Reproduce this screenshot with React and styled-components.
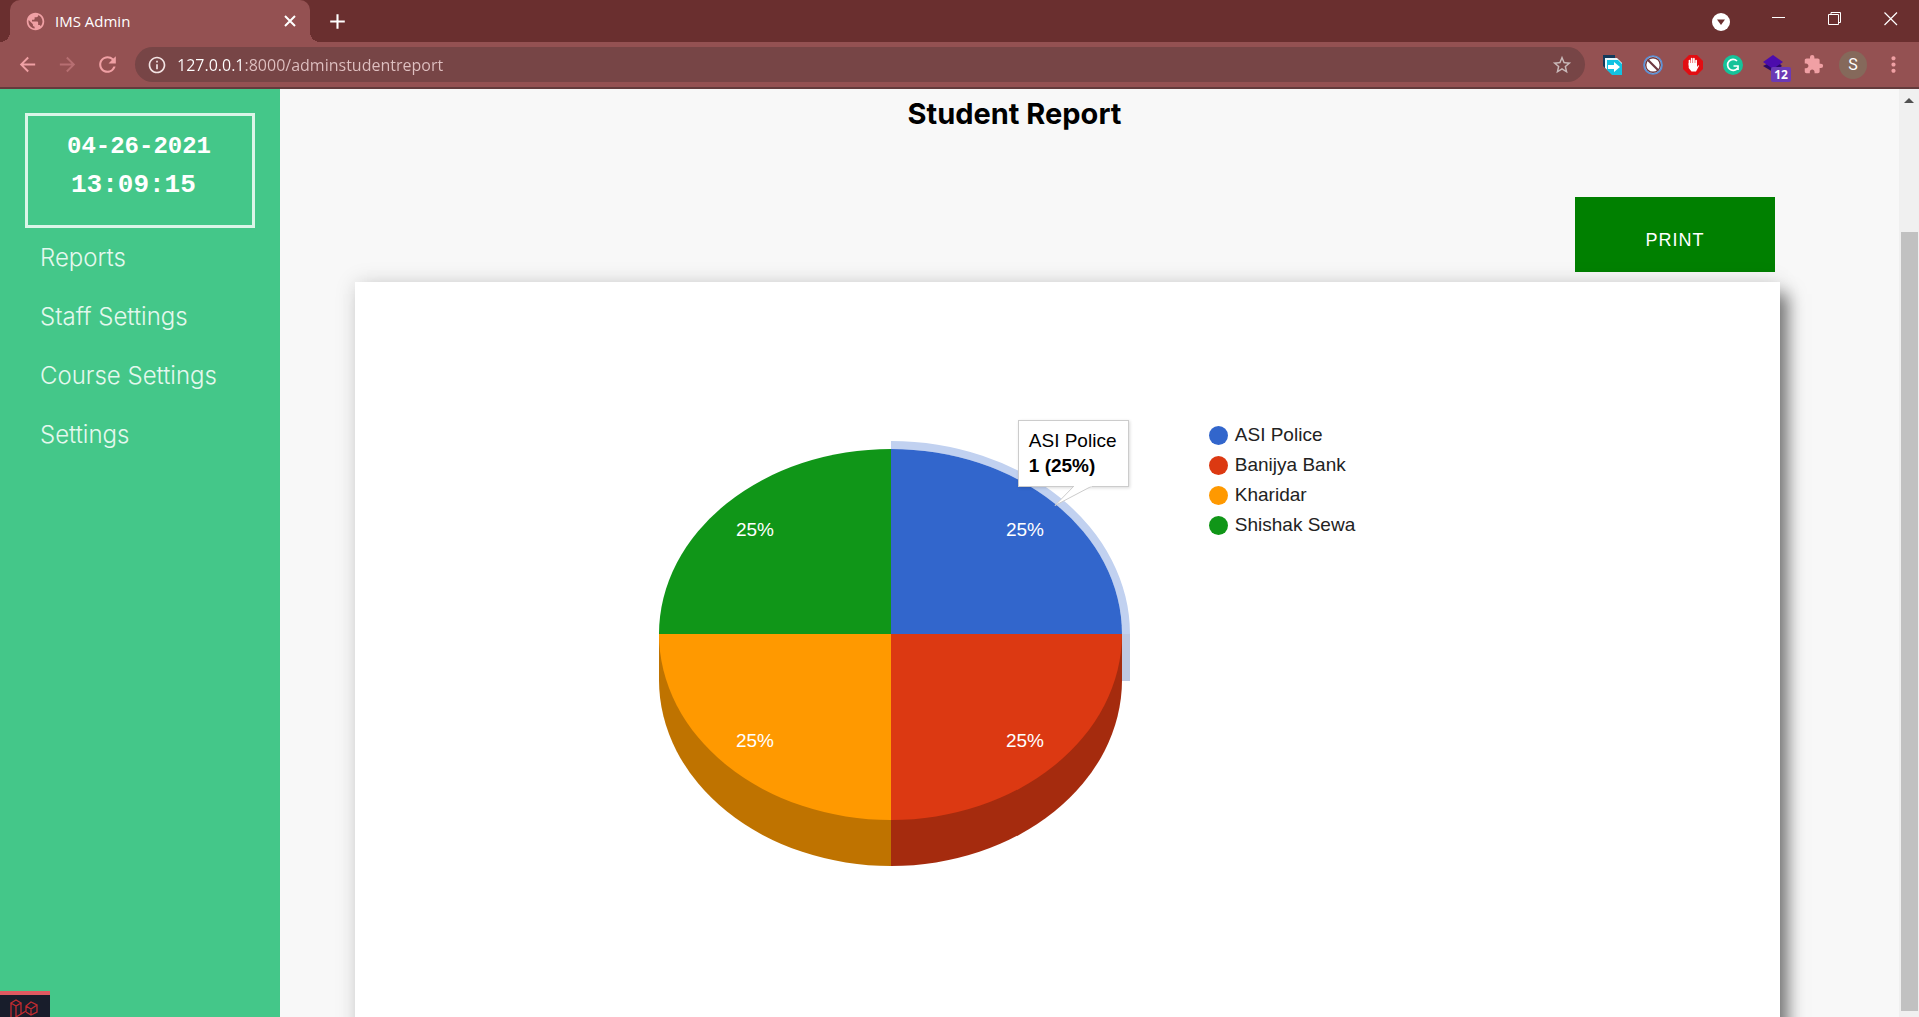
import React from "react";
import styled, { createGlobalStyle } from "styled-components";
import {
  MdArrowBack, MdArrowForward, MdRefresh, MdInfoOutline, MdStarBorder,
  MdExtension, MdPublic, MdClose, MdAdd, MdMoreVert,
} from "react-icons/md";

const GlobalStyle = createGlobalStyle`
  *, *::before, *::after { box-sizing: border-box; }
  body { margin: 0; overflow: hidden; background: #f8f8f8; font-family: "Liberation Sans", Arial, sans-serif; }
  button { padding: 0; border: 0; background: none; color: inherit; font: inherit; cursor: pointer; }
  svg { display: block; }
`;

const Window = styled.div`
  display: flex;
  flex-direction: column;
  height: 100vh;
`;

const BrowserBar = styled.header`
  flex: none;
  background: #945152;
  border-bottom: 2px solid #633b3c;
  font-family: "Open Sans", "Noto Sans", sans-serif;
`;

const TabStrip = styled.div`
  display: flex;
  align-items: center;
  height: 42px;
  padding-left: 10px;
  background: #6a2f2f;
  color: #fff;
`;

const Tab = styled.div`
  position: relative;
  display: flex;
  align-items: center;
  gap: 9px;
  width: 300px;
  height: 42px;
  padding: 0 10px 0 15px;
  border-radius: 10px 10px 0 0;
  background: #945152;
  font-size: 15px;
  line-height: 20px;

  &::before,
  &::after {
    content: "";
    position: absolute;
    bottom: 0;
    width: 10px;
    height: 10px;
  }
  &::before {
    right: 100%;
    background: radial-gradient(circle at 0 0, transparent 10px, #945152 10px);
  }
  &::after {
    left: 100%;
    background: radial-gradient(circle at 100% 0, transparent 10px, #945152 10px);
  }
`;

const Favicon = styled.span`
  color: #f0a0a4;
`;

const TabTitle = styled.span`
  flex: 1;
`;

const IconButton = styled.button`
  display: flex;
  flex: none;
  align-items: center;
  justify-content: center;
  width: ${(p) => p.$width || 40}px;
  height: 36px;
  color: ${(p) => p.$color || "#fff"};
`;

const WindowControls = styled.div`
  display: flex;
  align-items: center;
  margin-left: auto;
  padding-bottom: 4px;
`;

const TabSearch = styled(IconButton)`
  margin-right: 10px;
  padding-top: 5px;
`;

const Toolbar = styled.div`
  display: flex;
  align-items: center;
  height: 45px;
  padding: 0 6px 0 7px;
`;

const AddressBar = styled.form`
  display: flex;
  flex: 1;
  align-items: center;
  height: 35px;
  margin: 0 8px;
  padding-left: 12px;
  border-radius: 18px;
  background: #774546;
`;

const AddressInput = styled.input`
  flex: 1;
  min-width: 0;
  padding: 0;
  margin-left: 10px;
  border: 0;
  outline: 0;
  background: linear-gradient(to right, #fff 68px, #dfc0c1 68px);
  background-clip: text;
  -webkit-text-fill-color: transparent;
  font: 16px/24px "Open Sans", "Noto Sans", sans-serif;
`;

const Badge = styled.span`
  position: absolute;
  top: 20px;
  left: 18px;
  width: 20px;
  border-radius: 2px;
  background: #6b3ab5;
  color: #fff;
  font-size: 12px;
  font-weight: 700;
  line-height: 15px;
  text-align: center;
`;

const BadgedButton = styled(IconButton)`
  position: relative;
`;

const Avatar = styled.span`
  width: 28px;
  border-radius: 50%;
  background: #85695b;
  font-family: Roboto, sans-serif;
  font-size: 16px;
  line-height: 28px;
`;

const Page = styled.div`
  display: flex;
  flex: 1;
  min-height: 0;
`;

const Sidebar = styled.aside`
  flex: none;
  width: 280px;
  padding: 24px 25px;
  background: #44c789;
`;

const Clock = styled.div`
  height: 115px;
  padding: 11px 0 0 39px;
  border: 3px solid #dbf5e8;
  color: #fff;
  font-family: "Liberation Mono", monospace;
  font-weight: 700;
  line-height: 39px;
`;

const ClockDate = styled.div`
  font-size: 24px;
`;

const ClockTime = styled.div`
  padding-left: 4px;
  font-size: 26px;
`;

const Menu = styled.nav`
  display: flex;
  flex-direction: column;
  padding: 0 15px;
`;

const MenuLink = styled.a`
  color: #e4f8ee;
  font-family: Inter, Roboto, sans-serif;
  font-size: 24px;
  font-weight: 300;
  line-height: 59px;
  text-decoration: none;
  white-space: nowrap;
`;

const Main = styled.main`
  display: flex;
  flex: 1;
  flex-direction: column;
  min-width: 0;
  padding: 0 119px 0 75px;
  overflow: hidden;
  background: #f8f8f8;
`;

const Title = styled.h1`
  margin: 0;
  padding: 8px 106px 0 0;
  color: #000;
  font-family: Inter, Roboto, sans-serif;
  font-size: 29px;
  font-weight: 700;
  line-height: 34px;
  text-align: center;
`;

const PrintButton = styled.button`
  flex: none;
  align-self: flex-end;
  width: 200px;
  height: 75px;
  margin: 66px 5px 10px 0;
  padding-top: 12px;
  background: #008000;
  color: #fff;
  font-size: 18px;
  letter-spacing: 1px;
`;

const Card = styled.section`
  display: flex;
  flex: 1;
  align-items: flex-start;
  justify-content: center;
  gap: 51px;
  margin-bottom: -40px;
  padding: 138px 122px 0 0;
  background: #fff;
  box-shadow: 10px 10px 16px -2px rgba(0, 0, 0, 0.5), 0 0 20px rgba(0, 0, 0, 0.13);
`;

const Chart = styled.figure`
  position: relative;
  flex: none;
  margin: 0;
`;

const Tooltip = styled.div`
  position: absolute;
  top: 0;
  left: 360px;
  width: 111px;
  height: 67px;
  padding: 7px 10px;
  border: 1px solid #ccc;
  background: #fff;
  box-shadow: 1px 1px 3px rgba(0, 0, 0, 0.15);
  color: #000;
  font-size: 19px;
  line-height: 25px;
  white-space: nowrap;
`;

const Pointer = styled.svg`
  position: absolute;
  top: 64px;
  left: 35px;
`;

const Legend = styled.ul`
  flex: none;
  margin: 0;
  padding: 0;
  list-style: none;
`;

const LegendItem = styled.li`
  display: flex;
  align-items: center;
  gap: 7px;
  color: #222;
  font-size: 19px;
  line-height: 30px;

  &::before {
    content: "";
    width: 19px;
    height: 19px;
    border-radius: 50%;
    background: ${(p) => p.$color};
  }
`;

const ScrollTrack = styled.div`
  display: flex;
  flex: none;
  flex-direction: column;
  align-items: center;
  width: 20px;
  padding: 9px 0 6px;
  background: #f0f0f0;
`;

const ScrollThumb = styled.div`
  flex: 1;
  width: 17px;
  margin-top: 129px;
  background: #c1c1c1;
`;

const DebugBar = styled.button`
  position: fixed;
  bottom: 0;
  left: 0;
  width: 50px;
  height: 26px;
  overflow: hidden;
  border-top: 4px solid #df5a61;
  background: #181d2b;
`;

const courses = [
  { name: "ASI Police", color: "#3266cc" },
  { name: "Banijya Bank", color: "#dc3912" },
  { name: "Kharidar", color: "#ff9900" },
  { name: "Shishak Sewa", color: "#109618" },
];

const links = ["Reports", "Staff Settings", "Course Settings", "Settings"];

function Pie() {
  return (
    <svg width="500" height="470" viewBox="0 0 500 470" role="img" aria-label="Students per course">
      <path d="M464 214V261H472V214Z" fill="#bfc8e1" />
      <path d="M233 21A239 193 0 0 1 472 214H464A231 185 0 0 0 233 29Z" fill="#c1d1f0" />
      <path d="M1 214V260A232 186 0 0 0 233 446V214Z" fill="#bf7300" />
      <path d="M464 214V260A231 186 0 0 1 233 446V214Z" fill="#a52b0e" />
      <path d="M233 214V29A231 185 0 0 1 464 214Z" fill="#3266cc" />
      <path d="M233 214H464A231 186 0 0 1 233 400Z" fill="#dc3912" />
      <path d="M233 214V400A232 186 0 0 1 1 214Z" fill="#ff9900" />
      <path d="M233 214H1A232 185 0 0 1 233 29Z" fill="#109618" />
      <g fill="#fff" fontSize="19" textAnchor="middle">
        <text x="97" y="116">25%</text>
        <text x="367" y="116">25%</text>
        <text x="97" y="327">25%</text>
        <text x="367" y="327">25%</text>
      </g>
    </svg>
  );
}

function Browser() {
  return (
    <BrowserBar>
      <TabStrip>
        <Tab>
          <Favicon><MdPublic size={21} /></Favicon>
          <TabTitle>IMS Admin</TabTitle>
          <IconButton $width={20} aria-label="Close tab">
            <svg width="12" height="12" stroke="#fff" strokeWidth="2"><path d="M1 1L11 11M11 1L1 11" /></svg>
          </IconButton>
        </Tab>
        <IconButton $width={54} aria-label="New tab"><MdAdd size={25} /></IconButton>
        <WindowControls>
          <TabSearch aria-label="Tab search">
            <svg width="18" height="18"><circle cx="9" cy="9" r="9" fill="#fff" /><path d="M5 6.500H13L9 12Z" fill="#6a2f2f" /></svg>
          </TabSearch>
          <IconButton $width={56} aria-label="Minimize">
            <svg width="14" height="14"><path d="M0 5.500H13" stroke="#fff" /></svg>
          </IconButton>
          <IconButton $width={56} aria-label="Restore">
            <svg width="14" height="18" fill="none" stroke="#fff"><path d="M.5 4.500H10.500V14.500H.5ZM3 4V2.500H12.500V12.500H11" /></svg>
          </IconButton>
          <IconButton $width={56} aria-label="Close">
            <svg width="14" height="18" stroke="#fff" strokeWidth="1.200"><path d="M.5 2.500L13 15M13 2.500L.5 15" /></svg>
          </IconButton>
        </WindowControls>
      </TabStrip>
      <Toolbar>
        <IconButton $color="#f0a0a4" aria-label="Back"><MdArrowBack size={23} /></IconButton>
        <IconButton $color="#b76f72" aria-label="Forward"><MdArrowForward size={23} /></IconButton>
        <IconButton $color="#f0a0a4" aria-label="Reload"><MdRefresh size={25} /></IconButton>
        <AddressBar onSubmit={(e) => e.preventDefault()}>
          <MdInfoOutline size={20} color="#f3e4e4" />
          <AddressInput aria-label="Address" defaultValue="127.0.0.1:8000/adminstudentreport" />
          <IconButton type="button" $width={46} $color="#c9b9b9" aria-label="Bookmark"><MdStarBorder size={22} /></IconButton>
        </AddressBar>
        <IconButton aria-label="Sidebar extension">
          <svg width="20" height="20">
            <path d="M0 0H12V3H3V14L0 11Z" fill="#123a5c" />
            <path d="M2 3H14L19 8V17H7L2 13Z" fill="#e9fbff" />
            <path d="M4 5H15L19 9V20H9L4 15Z" fill="#12c2e2" />
            <path d="M5 10H11V7L17 12L11 17V14H5Z" fill="#fff" />
          </svg>
        </IconButton>
        <IconButton aria-label="Blocker extension">
          <svg width="20" height="20"><circle cx="10" cy="10" r="9" fill="#fff" stroke="#5b91d8" strokeWidth="1.700" /><circle cx="10" cy="10" r="7.300" fill="none" stroke="#6d3941" strokeWidth="1.400" /><path d="M5 5L15 15" stroke="#6d3941" strokeWidth="2.200" /></svg>
        </IconButton>
        <IconButton aria-label="Ad blocker">
          <svg width="20" height="20"><path d="M6 0H14L20 6V14L14 20H6L0 14V6Z" fill="#e20d12" /><path d="M6.500 10V5.500M8.700 9V3.700M10.900 9V3.700M13.100 10V5.500" stroke="#fff" strokeWidth="1.700" strokeLinecap="round" /><path d="M5.700 8H14V12L15.500 10L16 11L13 16.500H8.500L5.700 13Z" fill="#fff" /></svg>
        </IconButton>
        <IconButton aria-label="Grammar extension">
          <svg width="20" height="20" fill="none" stroke="#fff" strokeWidth="1.700"><circle cx="10" cy="10" r="10" fill="#15c39a" stroke="none" /><path d="M14 6A5.500 5.500 0 1 0 14.500 13.200M10.500 11H15V15" /></svg>
        </IconButton>
        <BadgedButton aria-label="Layers extension, 12">
          <svg width="20" height="20"><path d="M0 11L4 9L17 9L19 11L10 17Z" fill="#2a0969" /><path d="M10 0L20 7L10 14L0 7Z" fill="#4c0cad" /></svg>
          <Badge>12</Badge>
        </BadgedButton>
        <IconButton $color="#f0a0a4" aria-label="Extensions"><MdExtension size={21} /></IconButton>
        <IconButton aria-label="Profile"><Avatar>S</Avatar></IconButton>
        <IconButton $color="#f0a0a4" aria-label="Browser menu"><MdMoreVert size={25} /></IconButton>
      </Toolbar>
    </BrowserBar>
  );
}

export default function App() {
  return (
    <Window>
      <GlobalStyle />
      <Browser />
      <Page>
        <Sidebar>
          <Clock>
            <ClockDate>04-26-2021</ClockDate>
            <ClockTime>13:09:15</ClockTime>
          </Clock>
          <Menu>
            {links.map((link) => <MenuLink href="#" key={link}>{link}</MenuLink>)}
          </Menu>
        </Sidebar>
        <Main>
          <Title>Student Report</Title>
          <PrintButton>PRINT</PrintButton>
          <Card>
            <Chart>
              <Pie />
              <Tooltip>
                <div>ASI Police</div>
                <strong>1 (25%)</strong>
                <Pointer width="40" height="24">
                  <path d="M20 1L1 20.500L38 1" fill="#fff" stroke="#ccc" />
                  <path d="M20 0H38" stroke="#fff" strokeWidth="3" />
                </Pointer>
              </Tooltip>
            </Chart>
            <Legend>
              {courses.map((c) => <LegendItem key={c.name} $color={c.color}>{c.name}</LegendItem>)}
            </Legend>
          </Card>
        </Main>
        <ScrollTrack>
          <svg width="10" height="5"><path d="M0 5L5 0L10 5Z" fill="#505050" /></svg>
          <ScrollThumb />
        </ScrollTrack>
      </Page>
      <DebugBar aria-label="Open debug bar">
        <svg width="50" height="22" fill="none" stroke="#c22b30" strokeWidth="1.300">
          <path d="M11 8L16 5L21 8L16 11ZM11 8V22M16 11V22M21 8V19L26 16V11L31 7L37 10V17L31 20L26 17M26 11L31 14L37 10M31 14V20M21 19L16 22" />
        </svg>
      </DebugBar>
    </Window>
  );
}
